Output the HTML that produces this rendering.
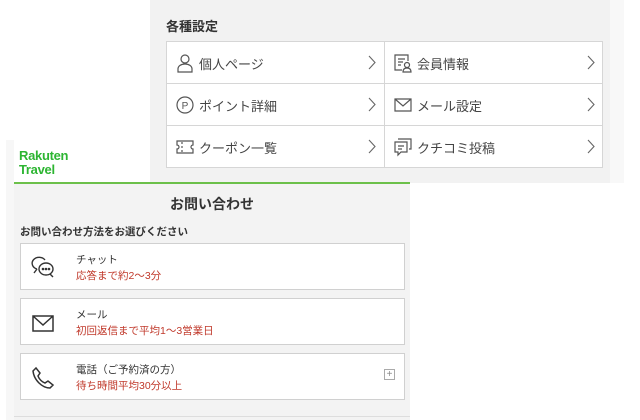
<!DOCTYPE html>
<html><head><meta charset="utf-8"><style>
*{margin:0;padding:0;box-sizing:border-box}
body{width:640px;height:420px;background:#fff;position:relative;overflow:hidden;font-family:"Liberation Sans","Noto Sans CJK JP",sans-serif;color:#333}
.top{position:absolute;left:150px;top:0;width:460px;height:183px;background:#f2f2f2}
.topr{position:absolute;left:610px;top:0;width:14px;height:183px;background:#f8f8f8}
.top h3{position:absolute;left:16px;top:16px;font-size:13px;font-weight:bold;color:#333}
.grid{position:absolute;left:16px;top:41px;width:437px;height:127px;background:#fff;border:1px solid #d6d6d6}
.cell{position:absolute;height:42px;width:218px;border-right:1px solid #d6d6d6;border-bottom:1px solid #d6d6d6;font-size:13px;color:#444}
.cell .l{position:absolute;left:32px;top:12px}
.cell svg{position:absolute;left:8px;top:11px}
.cell svg.ch{left:auto;right:8px;top:13px}
.bot{position:absolute;left:14px;top:182px;width:396px;height:238px;background:#f3f3f3;border-top:2px solid #6cc04a}
.shadow{position:absolute;left:6px;top:140px;width:8px;height:280px;background:#f7f7f7}
.logo{position:absolute;left:14px;top:141px;width:134px;height:41px;background:#fff}
.logo div{position:absolute;left:5px;top:8px;color:#2db532;font-weight:bold;font-size:13px;line-height:14px;letter-spacing:-0.3px}
.bot h2{position:absolute;left:0;width:396px;top:10px;text-align:center;font-size:14px;font-weight:bold;color:#333}
.bot .sub{position:absolute;left:6px;top:40px;font-size:10.5px;font-weight:bold;color:#333}
.card{position:absolute;left:6px;width:385px;height:47px;background:#fff;border:1px solid #d0d0d0}
.card .t{position:absolute;left:55px;top:8px;font-size:10.5px;color:#333}
.card .s{position:absolute;left:55px;top:24px;font-size:10.5px;color:#c0392b}
.card svg{position:absolute;left:9px;top:12px}
.line{position:absolute;left:0;top:232px;width:396px;height:1px;background:#ddd}
</style></head><body>
<div class="top">
<h3>各種設定</h3>
<div class="grid">
<div class="cell" style="left:0;top:0"><svg width="20" height="20" viewBox="0 0 20 20" fill="none" stroke="#555" stroke-width="1.2"><circle cx="10" cy="6" r="4"/><path d="M3 19v-3c0-3 3-5 7-5s7 2 7 5v3z"/></svg><span class="l">個人ページ</span><svg class="ch" width="8" height="15" viewBox="0 0 8 15" fill="none" stroke="#666" stroke-width="1.1"><path d="M1 1l6 6.5L1 14"/></svg></div>
<div class="cell" style="left:218px;top:0;border-right:none"><svg width="20" height="20" viewBox="0 0 20 20" fill="none" stroke="#555" stroke-width="1.2"><path d="M9 17H2V2h13v6M5 6h7M5 9h5M5 12h3"/><circle cx="14" cy="12" r="2.5"/><path d="M10 19c0-3 2-4 4-4s4 1 4 4z"/></svg><span class="l">会員情報</span><svg class="ch" width="8" height="15" viewBox="0 0 8 15" fill="none" stroke="#666" stroke-width="1.1"><path d="M1 1l6 6.5L1 14"/></svg></div>
<div class="cell" style="left:0;top:42px"><svg width="20" height="20" viewBox="0 0 20 20" fill="none" stroke="#555" stroke-width="1.2"><circle cx="10" cy="10" r="8"/><text x="10" y="14" font-size="10" text-anchor="middle" fill="#555" stroke="none" font-family="Liberation Sans">P</text></svg><span class="l">ポイント詳細</span><svg class="ch" width="8" height="15" viewBox="0 0 8 15" fill="none" stroke="#666" stroke-width="1.1"><path d="M1 1l6 6.5L1 14"/></svg></div>
<div class="cell" style="left:218px;top:42px;border-right:none"><svg width="20" height="20" viewBox="0 0 20 20" fill="none" stroke="#555" stroke-width="1.2"><path d="M2 4h16v12H2zM2 4l8 7 8-7"/></svg><span class="l">メール設定</span><svg class="ch" width="8" height="15" viewBox="0 0 8 15" fill="none" stroke="#666" stroke-width="1.1"><path d="M1 1l6 6.5L1 14"/></svg></div>
<div class="cell" style="left:0;top:84px;border-bottom:none"><svg width="20" height="20" viewBox="0 0 20 20" fill="none" stroke="#555" stroke-width="1.2"><path d="M2 4h16v4a2 2 0 0 0 0 4v4H2v-4a2 2 0 0 0 0-4z"/><path d="M7 5v2M7 9v2M7 13v2"/></svg><span class="l">クーポン一覧</span><svg class="ch" width="8" height="15" viewBox="0 0 8 15" fill="none" stroke="#666" stroke-width="1.1"><path d="M1 1l6 6.5L1 14"/></svg></div>
<div class="cell" style="left:218px;top:84px;border:none"><svg width="20" height="20" viewBox="0 0 20 20" fill="none" stroke="#555" stroke-width="1.2"><path d="M5 2h13v10h-2M2 5h12v10H8l-3 3v-3H2z"/><path d="M5 9h6M5 12h4"/></svg><span class="l">クチコミ投稿</span><svg class="ch" width="8" height="15" viewBox="0 0 8 15" fill="none" stroke="#666" stroke-width="1.1"><path d="M1 1l6 6.5L1 14"/></svg></div>
</div>
</div>
<div class="topr"></div>
<div class="shadow"></div>
<div class="logo"><div>Rakuten<br>Travel</div></div>
<div class="bot">
<h2>お問い合わせ</h2>
<div class="sub">お問い合わせ方法をお選びください</div>
<div class="card" style="top:59px"><svg width="26" height="24" viewBox="0 0 26 24" fill="none" stroke="#333" stroke-width="1.4"><path d="M7 13a7 6 0 1 1 8-9"/><path d="M4 17l3-4"/><ellipse cx="16" cy="13" rx="7" ry="6"/><path d="M20 18l3 3"/><circle cx="13" cy="13" r=".6" fill="#333"/><circle cx="16" cy="13" r=".6" fill="#333"/><circle cx="19" cy="13" r=".6" fill="#333"/></svg><div class="t">チャット</div><div class="s">応答まで約2～3分</div></div>
<div class="card" style="top:114px"><svg width="26" height="24" viewBox="0 0 26 24" fill="none" stroke="#333" stroke-width="1.5"><path d="M3 5h20v15H3zM3 5l10 9 10-9"/></svg><div class="t">メール</div><div class="s">初回返信まで平均1～3営業日</div></div>
<div class="card" style="top:169px"><svg width="26" height="24" viewBox="0 0 26 24" fill="none" stroke="#333" stroke-width="1.5"><path d="M6 2l4 5-2 3c1 3 4 6 7 7l3-2 5 4-3 3C12 22 4 14 3 5z"/></svg><div class="t">電話（ご予約済の方）</div><div class="s">待ち時間平均30分以上</div><div style="position:absolute;right:9px;top:15px;width:11px;height:11px;border:1px solid #aaa;font-size:10px;line-height:9px;text-align:center;color:#888">+</div></div>
<div class="line"></div>
</div>
</body></html>
